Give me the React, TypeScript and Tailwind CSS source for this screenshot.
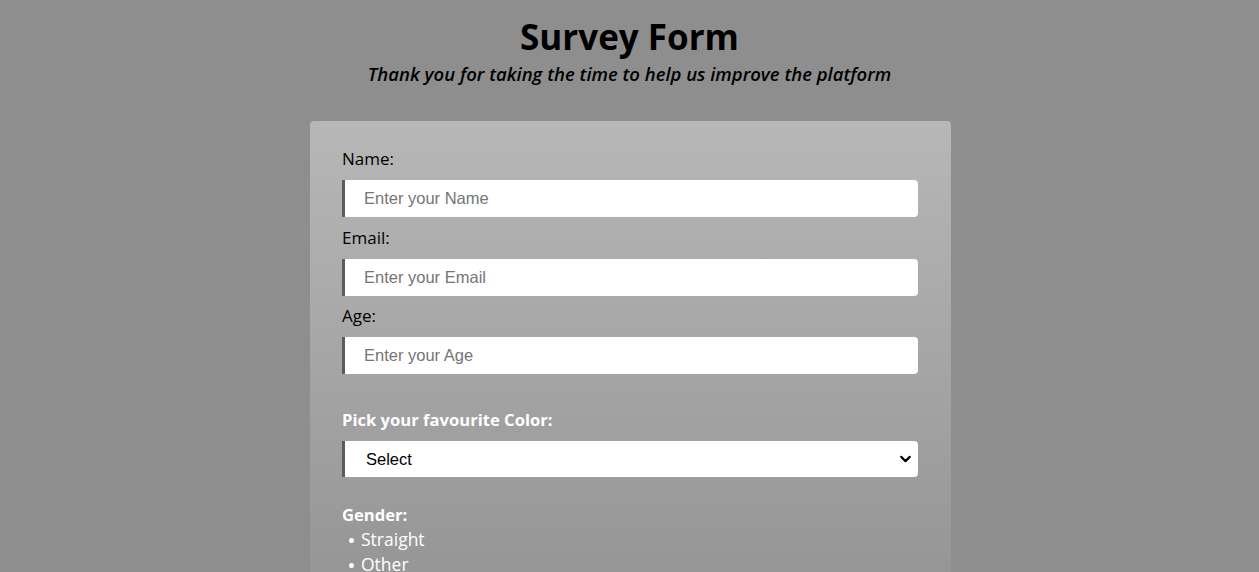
import { ChevronDown } from "lucide-react";

const inputCls =
    "block w-full h-[37px] bg-white border-l-[3px] border-[#5c5c5c] rounded-r-[4px] pl-[19px] text-[16.5px] text-black placeholder:text-[#757575] outline-none font-['Liberation_Sans',Arial,sans-serif]";

const Field = ({ label, placeholder, type = "text" }: { label: string; placeholder: string; type?: string }) => {
    return (
        <div>
            <label className="block text-[17px] leading-[24px] text-black mb-[9px]">{label}</label>
            <input type={type} placeholder={placeholder} className={inputCls} />
        </div>
    );
};

const App = () => {
    return (
        <div className="min-h-screen bg-[#8e8e8e] font-['Open_Sans',sans-serif] pb-10">
            <header className="text-center pt-[14px]">
                <h1 className="text-[35px] leading-[46px] font-bold text-black">Survey Form</h1>
                <p className="text-[18.5px] leading-[26px] font-semibold italic text-black mt-[1px]">
                    Thank you for taking the time to help us improve the platform
                </p>
            </header>

            <form className="w-[641px] mx-auto translate-x-[1px] mt-[34px] rounded-[4px] pl-[32px] pr-[33px] pt-[26px] pb-10 bg-[linear-gradient(to_bottom,#b7b7b7,#8e8e8e_560px)]">
                <div className="flex flex-col gap-[8.5px]">
                    <Field label="Name:" placeholder="Enter your Name" />
                    <Field label="Email:" placeholder="Enter your Email" type="email" />
                    <Field label="Age:" placeholder="Enter your Age" type="number" />
                </div>

                <div className="mt-[34px]">
                    <label className="block text-[16.6px] leading-[24px] font-bold text-white mb-[9px]">
                        Pick your favourite Color:
                    </label>
                    <div className="relative">
                        <select className="block w-full h-[36px] appearance-none bg-white border-l-[3px] border-[#5c5c5c] rounded-r-[4px] pl-[21px] pr-8 text-[16.5px] text-black outline-none font-['Liberation_Sans',Arial,sans-serif]">
                            <option>Select</option>
                            <option>Red</option>
                            <option>Green</option>
                            <option>Blue</option>
                        </select>
                        <ChevronDown
                            size={17}
                            strokeWidth={3}
                            className="absolute right-[4px] top-1/2 -translate-y-1/2 text-black pointer-events-none"
                        />
                    </div>
                </div>

                <div className="mt-[26px]">
                    <p className="text-[16.6px] leading-[24px] font-bold text-white">Gender:</p>
                    <ul className="pl-[7px] text-[17.5px] leading-[25px] text-white">
                        <li className="flex items-center">
                            <span className="w-[5px] h-[5px] rounded-full bg-white mr-[7px] mt-[2px]" />
                            Straight
                        </li>
                        <li className="flex items-center">
                            <span className="w-[5px] h-[5px] rounded-full bg-white mr-[7px] mt-[2px]" />
                            Other
                        </li>
                    </ul>
                </div>

                <div className="mt-6">
                    <label className="block text-[16.6px] leading-[24px] font-bold text-white mb-[9px]">Comments:</label>
                    <textarea className="block w-full h-24 bg-white border-l-[3px] border-[#5c5c5c] rounded-r-[4px]" />
                </div>
            </form>
        </div>
    );
};

export default App;
